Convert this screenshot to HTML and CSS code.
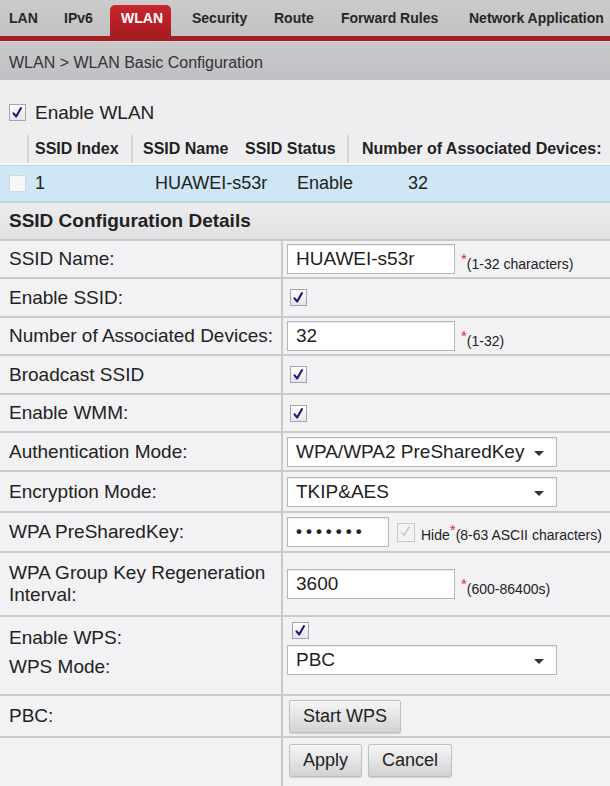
FILE: index.html
```html
<!DOCTYPE html>
<html lang="en">
<head>
  <meta charset="UTF-8">
  <title>WLAN Basic Configuration</title>
  <meta name="viewport" content="width=device-width, initial-scale=1">
  <link rel="stylesheet" href="styles.css">
</head>
<body>

<!-- TABS -->
<nav class="tabs">
  <a href="#" class="tab">LAN</a>
  <a href="#" class="tab">IPv6</a>
  <a href="#" class="tab active">WLAN</a>
  <a href="#" class="tab">Security</a>
  <a href="#" class="tab">Route</a>
  <a href="#" class="tab">Forward Rules</a>
  <a href="#" class="tab">Network Application</a>
</nav>
<div class="crumb">WLAN &gt; WLAN Basic Configuration</div>

<div class="content">
  <div class="enable-wlan">
    <span class="check on"><svg viewBox="0 0 17 17"><path d="M4 9.5 L7 13 L12.5 3.5" /></svg></span>
    <span>Enable WLAN</span>
  </div>

  <div class="ssid-list">
    <div class="ssid-head">
      <div class="c0"></div>
      <div class="c1">SSID Index</div>
      <div class="c2">SSID Name</div>
      <div class="c3">SSID Status</div>
      <div class="c4">Number of Associated Devices:</div>
    </div>
    <div class="ssid-row">
      <div class="c0"><span class="check plain"></span></div>
      <div class="c1">1</div>
      <div class="c2">HUAWEI-s53r</div>
      <div class="c3">Enable</div>
      <div class="c4">32</div>
    </div>
  </div>

  <div class="section-title">SSID Configuration Details</div>

  <div class="form">
    <div class="row h38">
      <div class="label">SSID Name:</div>
      <div class="field">
        <span class="input w168">HUAWEI-s53r</span>
        <span class="hint"><b>*</b>(1-32 characters)</span>
      </div>
    </div>
    <div class="row h39">
      <div class="label">Enable SSID:</div>
      <div class="field"><span class="check on"><svg viewBox="0 0 17 17"><path d="M4 9.5 L7 13 L12.5 3.5" /></svg></span></div>
    </div>
    <div class="row h38">
      <div class="label">Number of Associated Devices:</div>
      <div class="field">
        <span class="input w168">32</span>
        <span class="hint"><b>*</b>(1-32)</span>
      </div>
    </div>
    <div class="row h39">
      <div class="label">Broadcast SSID</div>
      <div class="field"><span class="check on"><svg viewBox="0 0 17 17"><path d="M4 9.5 L7 13 L12.5 3.5" /></svg></span></div>
    </div>
    <div class="row h38">
      <div class="label">Enable WMM:</div>
      <div class="field"><span class="check on"><svg viewBox="0 0 17 17"><path d="M4 9.5 L7 13 L12.5 3.5" /></svg></span></div>
    </div>
    <div class="row h39">
      <div class="label">Authentication Mode:</div>
      <div class="field">
        <span class="select">WPA/WPA2 PreSharedKey<i class="arrow"></i></span>
      </div>
    </div>
    <div class="row h41">
      <div class="label">Encryption Mode:</div>
      <div class="field">
        <span class="select">TKIP&amp;AES<i class="arrow"></i></span>
      </div>
    </div>
    <div class="row h40">
      <div class="label">WPA PreSharedKey:</div>
      <div class="field">
        <span class="input w102 dots">&#8226;&#8226;&#8226;&#8226;&#8226;&#8226;&#8226;</span>
        <span class="check off"><svg viewBox="0 0 17 17"><path d="M4 9.5 L7 13 L12.5 3.5" /></svg></span>
        <span class="hint small">Hide<b>*</b>(8-63 ASCII characters)</span>
      </div>
    </div>
    <div class="row h64">
      <div class="label two">WPA Group Key Regeneration Interval:</div>
      <div class="field">
        <span class="input w168">3600</span>
        <span class="hint"><b>*</b>(600-86400s)</span>
      </div>
    </div>
    <div class="row h79">
      <div class="label stack">
        <span>Enable WPS:</span>
        <span>WPS Mode:</span>
      </div>
      <div class="field stack">
        <span class="check on"><svg viewBox="0 0 17 17"><path d="M4 9.5 L7 13 L12.5 3.5" /></svg></span>
        <span class="select">PBC<i class="arrow"></i></span>
      </div>
    </div>
    <div class="row h42">
      <div class="label">PBC:</div>
      <div class="field"><button class="btn">Start WPS</button></div>
    </div>
    <div class="row last">
      <div class="label"></div>
      <div class="field buttons">
        <button class="btn">Apply</button>
        <button class="btn">Cancel</button>
      </div>
    </div>
  </div>
</div>

</body>
</html>
```

FILE: styles.css
```css
body {
  margin: 0;
  font-family: "Liberation Sans", Arial, sans-serif;
  color: #222;
  background-color: #eeeef0;
  width: 610px;
  height: 786px;
  overflow: hidden;
}

/* tabs */
.tabs {
  display: flex;
  align-items: flex-end;
  height: 36px;
  background: linear-gradient(#cbcbcb, #c2c2c2);
  border-bottom: 5px solid #a51c22;
  box-shadow: 0 1px 0 #d9c9c9;
}

.tab {
  display: block;
  flex: 0 0 auto;
  box-sizing: border-box;
  height: 31px;
  line-height: 27px;
  padding-left: 9px;
  font-size: 14px;
  font-weight: bold;
  color: #262626;
  text-decoration: none;
  white-space: nowrap;
}

.tab:nth-child(1) { width: 55px; }
.tab:nth-child(2) { width: 55px; }
.tab:nth-child(3) { width: 61px; padding-left: 11px; }
.tab:nth-child(4) { width: 94px; padding-left: 21px; }
.tab:nth-child(5) { width: 67px; }
.tab:nth-child(6) { width: 128px; }
.tab:nth-child(7) { width: 150px; }

.tab.active {
  color: #fff;
  background: linear-gradient(#c9262d, #a61c21);
  border-radius: 5px 5px 0 0;
}

.crumb {
  height: 38px;
  line-height: 42px;
  padding-left: 9px;
  font-size: 16px;
  color: #333;
  background: linear-gradient(#c9c9cb, #bfc0c4);
  border-top: 1px solid #d7d7d7;
}

/* checkbox */
.check {
  display: inline-block;
  flex: 0 0 auto;
  width: 17px;
  height: 17px;
  box-sizing: border-box;
  border: 1px solid #a4a4ae;
  background: linear-gradient(#ffffff, #e6e6ea);
  vertical-align: middle;
}

.check svg {
  display: block;
  width: 15px;
  height: 15px;
  fill: none;
  stroke: #1c1a6e;
  stroke-width: 2.4;
  stroke-linecap: round;
  stroke-linejoin: round;
}

.check.off {
  border-color: #c8c8c8;
  background: #f3f3f3;
}

.check.off svg {
  stroke: #c4c4c4;
  stroke-width: 1.6;
}

.check.plain {
  border-color: #cfd8de;
  background: #f7f7f7;
}

.enable-wlan {
  display: flex;
  align-items: center;
  gap: 9px;
  padding: 12px 0 0 9px;
  height: 41px;
  font-size: 19px;
}

/* ssid list */
.ssid-list {
  margin-top: 2px;
  font-size: 16px;
}

.ssid-head {
  display: grid;
  grid-template-columns: 27px 104px 104px 112px 1fr;
  height: 28px;
  font-weight: bold;
  line-height: 28px;
  white-space: nowrap;
  border-bottom: 2px solid #f8f8f8;
}

.ssid-head > div {
  border-left: 2px solid #d6d6d8;
  padding-left: 6px;
}

.ssid-head .c0 {
  border-left: none;
}

.ssid-head .c2 {
  padding-left: 10px;
}

.ssid-head .c3 {
  border-left: none;
  padding-left: 10px;
}

.ssid-head .c4 {
  padding-left: 13px;
}

.ssid-row {
  display: grid;
  grid-template-columns: 27px 128px 142px 111px 1fr;
  height: 35px;
  line-height: 35px;
  font-size: 18px;
  white-space: nowrap;
  background: #cfe6f4;
  border-top: 1px solid #bfd6e4;
  border-bottom: 2px solid #c6d2da;
}

.ssid-row .c0 {
  padding-left: 9px;
  display: flex;
  align-items: center;
}

.ssid-row .c1 {
  padding-left: 8px;
}

.section-title {
  height: 35px;
  line-height: 33px;
  padding-left: 9px;
  font-size: 19px;
  font-weight: bold;
  background: linear-gradient(#ececee, #e1e1e4);
  border-top: 1px solid #e4eef4;
}

/* form */
.form {
  border-top: 2px solid #cacacc;
  background: #f2f2f4;
}

.row {
  display: grid;
  grid-template-columns: 283px 1fr;
  box-sizing: border-box;
  border-bottom: 2px solid #cacacc;
}

.row.h38 { height: 38px; }
.row.h39 { height: 39px; }
.row.h40 { height: 40px; }
.row.h41 { height: 41px; }
.row.h42 { height: 42px; }
.row.h64 { height: 64px; }
.row.h79 { height: 79px; }
.row.last { height: 51px; border-bottom: none; }

.label {
  display: flex;
  align-items: center;
  padding-left: 9px;
  font-size: 19px;
  white-space: nowrap;
  border-right: 2px solid #cacacc;
}

.label.two {
  display: block;
  padding-top: 9px;
  padding-right: 0;
  line-height: 22px;
  white-space: normal;
}

.label.stack, .field.stack {
  flex-direction: column;
  align-items: flex-start;
  justify-content: center;
}

.label.stack {
  gap: 7px;
  line-height: 22px;
  padding-bottom: 6px;
}

.field {
  display: flex;
  align-items: center;
  padding-left: 4px;
}

.field.stack {
  gap: 6px;
  padding-left: 6px;
  padding-top: 5px;
  justify-content: flex-start;
}

.field.stack .select {
  margin-left: -2px;
}

.row > .field > .check {
  margin-left: 3px;
}

.input, .select {
  display: inline-flex;
  align-items: center;
  box-sizing: border-box;
  height: 30px;
  padding-left: 8px;
  font-size: 19px;
  white-space: nowrap;
  background: #fff;
  border: 1px solid #b6b6b8;
  box-shadow: inset 0 1px 1px rgba(0, 0, 0, 0.08);
}

.input.w168 { width: 168px; }
.input.w102 { width: 102px; }

.input.dots {
  font-size: 17px;
  font-weight: bold;
  letter-spacing: 4px;
  padding-left: 8px;
}

.select {
  position: relative;
  width: 270px;
}

.arrow {
  position: absolute;
  right: 12px;
  top: 13px;
  border-left: 5px solid transparent;
  border-right: 5px solid transparent;
  border-top: 5px solid #333;
}

.hint {
  margin-left: 6px;
  font-size: 14px;
  padding-top: 4px;
  white-space: nowrap;
}

.hint b {
  color: #d2264f;
  font-weight: normal;
  font-size: 15px;
  vertical-align: 5px;
}

.hint.small {
  margin-left: 6px;
  padding-top: 0;
}

.field .check.off {
  margin-left: 8px;
  width: 18px;
  height: 19px;
}

.btn {
  font-family: "Liberation Sans", Arial, sans-serif;
  font-size: 18px;
  color: #222;
  height: 33px;
  padding: 0 13px;
  background: linear-gradient(#f6f6f6, #d2d2d4);
  border: 1px solid #c0c0c2;
  border-radius: 2px;
  box-shadow: 0 1px 1px rgba(0, 0, 0, 0.15);
}

.buttons {
  gap: 4px;
  align-items: flex-start;
  padding-top: 6px;
}

.field .btn {
  margin-left: 2px;
}
```
